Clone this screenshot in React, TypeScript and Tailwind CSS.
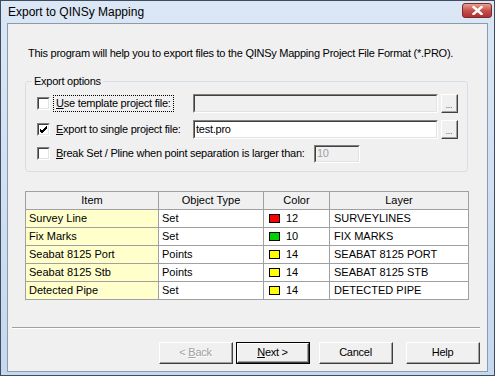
import { FC } from 'react'

type Row = {
  item: string
  type: string
  color: string
  code: string
  layer: string
}

const rows: Row[] = [
  { item: 'Survey Line', type: 'Set', color: '#ff0000', code: '12', layer: 'SURVEYLINES' },
  { item: 'Fix Marks', type: 'Set', color: '#00d000', code: '10', layer: 'FIX MARKS' },
  { item: 'Seabat 8125 Port', type: 'Points', color: '#ffff00', code: '14', layer: 'SEABAT 8125 PORT' },
  { item: 'Seabat 8125 Stb', type: 'Points', color: '#ffff00', code: '14', layer: 'SEABAT 8125 STB' },
  { item: 'Detected Pipe', type: 'Set', color: '#ffff00', code: '14', layer: 'DETECTED PIPE' },
]

const CheckBox: FC<{ checked?: boolean }> = ({ checked }) => (
  <div className="w-[13px] h-[13px] shrink-0 border border-t-[#808080] border-l-[#808080] border-b-white border-r-white">
    <div className="w-full h-full bg-white border border-t-[#404040] border-l-[#404040] border-b-[#e3e3e3] border-r-[#e3e3e3] flex items-center justify-center">
      {checked && (
        <svg width="9" height="9" viewBox="0 0 9 9">
          <path d="M1 4 L3 6 L8 1 M1 5 L3 7 L8 2 M1 6 L3 8 L8 3" stroke="#000" strokeWidth="1" fill="none" />
        </svg>
      )}
    </div>
  </div>
)

const TextBox: FC<{ value?: string; disabled?: boolean; className?: string }> = ({ value, disabled, className }) => (
  <div className={`border border-t-[#808080] border-l-[#808080] border-b-white border-r-white ${className}`}>
    <div
      className={`w-full h-full border border-t-[#404040] border-l-[#404040] border-b-[#e3e3e3] border-r-[#e3e3e3] flex items-center px-[1px] ${
        disabled ? 'bg-[#f0f0f0] text-[#a0a0a0]' : 'bg-white text-black'
      }`}
    >
      {value}
    </div>
  </div>
)

const DotsButton: FC = () => (
  <div className="w-[17px] h-[19px] border border-t-white border-l-white border-b-[#404040] border-r-[#404040]">
    <div className="w-full h-full bg-[#f0f0f0] border-b border-r border-b-[#a0a0a0] border-r-[#a0a0a0] flex items-end justify-center text-[9px] leading-[12px] text-[#555]">
      ...
    </div>
  </div>
)

const Button: FC<{ children: React.ReactNode; isDefault?: boolean; disabled?: boolean }> = ({
  children,
  isDefault,
  disabled,
}) => (
  <div className={`w-[74px] h-[22px] ${isDefault ? 'border border-black' : ''}`}>
    <div className="w-full h-full border border-t-white border-l-white border-b-[#404040] border-r-[#404040]">
      <div
        className={`w-full h-full bg-[#f0f0f0] border-b border-r border-b-[#a0a0a0] border-r-[#a0a0a0] flex items-center justify-center ${
          disabled ? 'text-[#a0a0a0] [text-shadow:1px_1px_0_#fff]' : 'text-black'
        }`}
      >
        {children}
      </div>
    </div>
  </div>
)

const App: FC = () => {
  return (
    <div
      className="w-[495px] h-[376px] overflow-hidden flex flex-col bg-gradient-to-b from-[#dbe7f5] to-[#c6d8ee] border border-[#3d4c60] text-[11px] leading-[13px] tracking-[-0.25px] text-black"
      style={{ fontFamily: '"Liberation Sans", Arial, sans-serif' }}
    >
      {/* title bar */}
      <div className="h-[22px] shrink-0 flex items-center justify-between pl-[7px] pr-[2px]">
        <span className="text-[12px] tracking-normal text-black">Export to QINSy Mapping</span>
        <div className="w-[30px] h-[15px] mb-[4px] rounded-[3px] border border-[#7a2a2a] bg-gradient-to-b from-[#e8a090] via-[#c75050] to-[#b03030] flex items-center justify-center">
          <svg width="11" height="9" viewBox="0 0 11 9">
            <path d="M1.5 1 L9.5 8 M9.5 1 L1.5 8" stroke="#fff" strokeWidth="2.4" strokeLinecap="square" />
          </svg>
        </div>
      </div>

      {/* client area */}
      <div className="flex-1 mx-[6px] mb-[3px] bg-[#f0f0f0] border border-[#8a9bb0] flex flex-col">
        <p className="mt-[23px] ml-[20px] whitespace-nowrap">
          This program will help you to export files to the QINSy Mapping Project File Format (*.PRO).
        </p>

        {/* Export options group */}
        <div className="relative mt-[21px] ml-[17px] w-[443px] h-[91px] border border-[#d5dfe5] rounded-[3px] pt-[11px] pl-[11px]">
          <span className="absolute -top-[7px] left-[6px] px-[2px] bg-[#f0f0f0]">Export options</span>

          <div className="h-[21px] flex items-center">
            <CheckBox />
            <div className="w-[143px] shrink-0 pl-[3px] whitespace-nowrap">
              <span className="inline-block border border-dotted border-black px-[2px] py-[1px]">
                <span className="underline">U</span>se template project file:
              </span>
            </div>
            <TextBox disabled className="w-[245px] h-[19px]" />
            <div className="ml-[3px]">
              <DotsButton />
            </div>
          </div>

          <div className="h-[21px] mt-[5px] flex items-center">
            <CheckBox checked />
            <div className="w-[143px] shrink-0 pl-[6px] whitespace-nowrap">
              <span className="underline">E</span>xport to single project file:
            </div>
            <TextBox value="test.pro" className="w-[245px] h-[19px]" />
            <div className="ml-[3px]">
              <DotsButton />
            </div>
          </div>

          <div className="h-[21px] mt-[3px] flex items-center">
            <CheckBox />
            <div className="w-[264px] shrink-0 pl-[6px] whitespace-nowrap">
              <span className="underline">B</span>reak Set / Pline when point separation is larger than:
            </div>
            <TextBox value="10" disabled className="w-[46px] h-[18px]" />
          </div>
        </div>

        {/* table */}
        <table className="mt-[19px] ml-[17px] w-[443px] border-collapse border border-[#a0a0a0] text-[11px] leading-[17px] tracking-normal table-fixed">
          <colgroup>
            <col className="w-[133px]" />
            <col className="w-[105px]" />
            <col className="w-[66px]" />
            <col className="w-[139px]" />
          </colgroup>
          <thead>
            <tr className="h-[17px] bg-[#f0f0f0]">
              <th className="font-normal border border-[#a0a0a0] p-0">Item</th>
              <th className="font-normal border border-[#a0a0a0] p-0">Object Type</th>
              <th className="font-normal border border-[#a0a0a0] p-0">Color</th>
              <th className="font-normal border border-[#a0a0a0] p-0">Layer</th>
            </tr>
          </thead>
          <tbody>
            {rows.map((r) => (
              <tr key={r.item} className="h-[18px]">
                <td className="bg-[#ffffcc] border border-[#a0a0a0] pl-[3px] py-0">{r.item}</td>
                <td className="bg-white border border-[#a0a0a0] pl-[3px] py-0">{r.type}</td>
                <td className="bg-white border border-[#a0a0a0] pl-[5px] py-0">
                  <div className="flex items-center gap-[6px]">
                    <span className="inline-block w-[11px] h-[9px] border border-black" style={{ background: r.color }} />
                    <span>{r.code}</span>
                  </div>
                </td>
                <td className="bg-white border border-[#a0a0a0] pl-[4px] py-0">{r.layer}</td>
              </tr>
            ))}
          </tbody>
        </table>

        {/* separator */}
        <div className="mt-[27px] ml-[4px] w-[468px] border-t border-t-[#a0a0a0] border-b border-b-white" />

        {/* buttons */}
        <div className="mt-[13px] ml-[151px] flex">
          <Button disabled>
            &lt; <span className="underline ml-[3px]">B</span>ack
          </Button>
          <div className="ml-[3px]">
            <Button isDefault>
              <span className="underline">N</span>ext &gt;
            </Button>
          </div>
          <div className="ml-[9px]">
            <Button>Cancel</Button>
          </div>
          <div className="ml-[13px]">
            <Button>Help</Button>
          </div>
        </div>
      </div>
    </div>
  )
}

export default App
